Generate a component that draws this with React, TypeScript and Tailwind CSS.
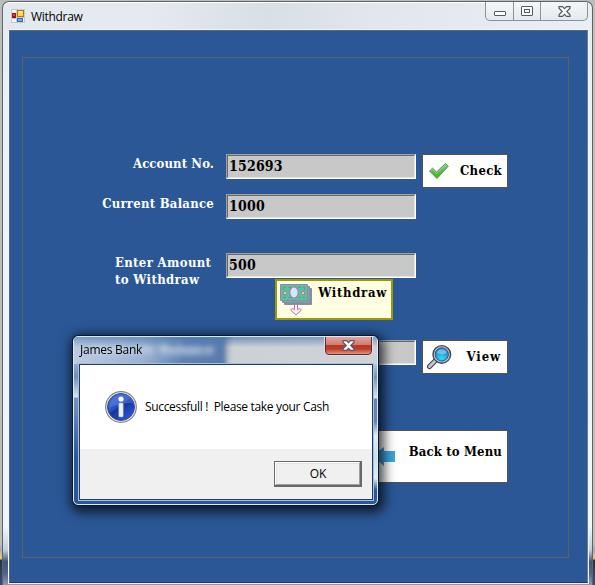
import type { ReactNode } from "react";

const serif = "font-['DejaVu_Serif_Condensed','DejaVu_Serif',serif] [font-stretch:condensed] font-bold whitespace-nowrap";
const sans = "font-['Open_Sans','Noto_Sans',sans-serif] whitespace-nowrap";

function Field({ value }: { value?: string }) {
  return (
    <div className="h-[25px] w-[190px] border border-t-[#a0a0a0] border-l-[#a0a0a0] border-r-white border-b-white">
      <div className={`h-full border border-t-[#696969] border-l-[#696969] border-r-[#e3e3e3] border-b-[#e3e3e3] bg-[#c8c8c8] pl-px text-[14px] leading-[21px] tracking-[0.2px] text-black ${serif}`}>
        {value}
      </div>
    </div>
  );
}

function Label({ children, className = "" }: { children: ReactNode; className?: string }) {
  return <div className={`text-[13px] leading-[17px] text-white ${serif} ${className}`}>{children}</div>;
}

function CheckIcon() {
  return (
    <svg width="22" height="18" viewBox="0 0 22 18">
      <defs>
        <linearGradient id="tick" x1="0" y1="0" x2="0" y2="1">
          <stop offset="0" stopColor="#8fd08e" />
          <stop offset=".5" stopColor="#62b45c" />
          <stop offset="1" stopColor="#35c100" />
        </linearGradient>
      </defs>
      <path d="M1.500 9 4.500 6.200l4 3.800L17.500 1.500l2.800 2.700L9 16.500z" fill="url(#tick)" stroke="#4f9d50" strokeWidth="1" strokeLinejoin="round" />
      <path d="m3 8.800 1.500-1.200 4 4L17.500 3" fill="none" stroke="#a8dba6" strokeWidth=".8" />
    </svg>
  );
}

function CashIcon() {
  return (
    <svg width="33" height="33" viewBox="0 0 33 33">
      <path d="M4.500 4.500h27v16h-27z" fill="#58a598" stroke="#a47fae" />
      <path d="M2.500 2.500h27v16h-27z" fill="#60b6a0" stroke="#a47fae" />
      <path d="M.5.500h27v16H.5z" fill="#5cc0a0" stroke="#a47fae" />
      <path d="M3 3.500h22M3 13.500h22M3.500 3v11M24.500 3v11" stroke="#5a9d94" strokeDasharray="3 2" />
      <ellipse cx="14" cy="8.500" rx="4.200" ry="5.500" fill="#d5edfc" stroke="#a47fae" strokeWidth="1.200" />
      <path d="m11.500 10 4-4M13 12l4-4" stroke="#b8d8f5" />
      <circle cx="5" cy="9" r="1.700" fill="#efd18a" stroke="#a47fae" />
      <circle cx="23" cy="9" r="1.700" fill="#efd18a" stroke="#a47fae" />
      <path d="M14.500 20.500h3v5l2.500-1 1.500 1.500-5.500 5-5.500-5 1.500-1.500 2.500 1z" fill="#f8e7ee" stroke="#aa84ad" />
    </svg>
  );
}

function MagnifierIcon() {
  return (
    <svg width="25" height="26" viewBox="0 0 25 26">
      <defs>
        <radialGradient id="lens" cx=".5" cy=".8" r=".8">
          <stop offset="0" stopColor="#22e4f5" />
          <stop offset=".5" stopColor="#23a9df" />
          <stop offset="1" stopColor="#2470b5" />
        </radialGradient>
      </defs>
      <path d="m9.500 15.500-7 7" stroke="#373c49" strokeWidth="5" strokeLinecap="round" />
      <path d="m9.500 15.500-7 7" stroke="#c2c7d0" strokeWidth="3" strokeLinecap="round" />
      <circle cx="14.800" cy="10.400" r="8.800" fill="#c0c5ce" stroke="#3f4655" strokeWidth="1.400" />
      <circle cx="14.800" cy="10.400" r="6.600" fill="url(#lens)" stroke="#315987" />
      <path d="M10 9c0-5 9.500-5 9.500 0-2 1.500-7 1.500-9.500 0" fill="#95cdeb" opacity=".7" />
    </svg>
  );
}

function InfoIcon() {
  return (
    <svg width="32" height="32" viewBox="0 0 32 32">
      <defs>
        <linearGradient id="info" x1="0" y1="0" x2=".7" y2="1">
          <stop offset="0" stopColor="#4a75dc" />
          <stop offset=".5" stopColor="#2450c0" />
          <stop offset=".55" stopColor="#153597" />
          <stop offset="1" stopColor="#2855da" />
        </linearGradient>
      </defs>
      <circle cx="16" cy="16" r="15.300" fill="#eee" stroke="#858585" strokeWidth="1.200" />
      <circle cx="16" cy="16" r="13.500" fill="url(#info)" stroke="#3b4c96" />
      <path d="M4 17C5 0 27 0 28 12c-7 0-17 1-24 5" fill="#7598ec" opacity=".35" />
      <circle cx="16" cy="8" r="2.600" fill="white" />
      <rect x="13.800" y="12" width="4.400" height="14" rx="1" fill="#f0f0f4" stroke="#a8b4d6" strokeWidth=".5" />
    </svg>
  );
}

function CloseGlyph() {
  return (
    <svg width="13" height="11" viewBox="0 0 13 11">
      <path d="M1 .7h3.500l2 2 2-2H12v1.500L8.800 5.500 12 8.800v1.500H8.500l-2-2-2 2H1V8.800l3.200-3.300L1 2.200z" fill="#fafafa" stroke="#535966" strokeWidth="1.200" />
    </svg>
  );
}

function AppIcon() {
  return (
    <svg width="14" height="14" viewBox="0 0 14 14" shapeRendering="crispEdges">
      <path d="M0 0h14v14H0z" fill="#c6c9cd" />
      <path d="M1 1h4v3H1zM1 10h4v3H1zM12 9h1v4h-1z" fill="#f4f4f4" />
      <path d="M1 4h4v5H1z" fill="#8e1720" />
      <path d="M2 5h2v2H2z" fill="#e3473b" />
      <path d="M6 1h7v7H6z" fill="#b07c12" />
      <path d="M7 2h5v5H7z" fill="#ffd34c" />
      <path d="M8 2h3v2H8z" fill="#ffe68e" />
      <path d="M6 9h6v4H6z" fill="#3769ba" />
      <path d="M7 10h4v2H7z" fill="#79a9ee" />
    </svg>
  );
}

function MessageBox() {
  return (
    <div className="absolute left-[73px] top-[336px] flex h-[169px] w-[305px] flex-col rounded-[5px] border border-[#dce8f2] bg-[linear-gradient(180deg,transparent_27px,#8fa9cc_27px,#6b8ebd_40px,#dce6f2_60px,#7295c2_61px,#6488b9_75px,#295798_120px,#295798_100%)] pl-[5px] pr-[4px] pb-[4px] shadow-[0_0_0_1px_#071a33,2px_3px_12px_4px_rgba(0,0,0,0.75)]">
      <div className="absolute right-0 top-[27px] h-[130px] w-[5px] bg-[linear-gradient(180deg,#b9c8dc_0%,#7094c0_10%,#dce7f3_26%,#6287b9_27%,#5e83b6_44%,#e3f0f8_55%,#c0e3f2_72%,#e1edf5_88%,#285799_97%)]" />
      <div className="relative -ml-[5px] -mr-[4px] flex h-[27px] shrink-0 items-start justify-between overflow-hidden rounded-t-[4px] bg-[linear-gradient(90deg,rgba(225,233,243,0.8)_0px,rgba(190,206,227,0.75)_70px,rgba(190,206,227,0.35)_110px,rgba(190,206,227,0.3)_150px,rgba(205,211,217,0.8)_160px,#cfd3d7_100%)] pl-[6px] pr-[5px] backdrop-blur-[3px]">
        <div className="absolute inset-0 bg-[linear-gradient(180deg,#4e79b0_0,transparent_38%)] opacity-60" />
        <span className={`relative mt-[4px] text-[12px] leading-[17px] tracking-[-0.25px] text-black ${sans}`}>James Bank</span>
        <div className="relative -mt-px flex h-[19px] w-[47px] items-center justify-center rounded-b-[4px] border border-[#5b2c32] bg-[linear-gradient(180deg,#e5a399_0%,#cf7a6d_46%,#ba3827_50%,#bd3b29_70%,#e59580_100%)] shadow-[0_0_0_1px_#e2d9da]">
          <CloseGlyph />
        </div>
      </div>
      <div className="relative flex flex-1 flex-col border border-[#223b5e] shadow-[0_0_0_1px_#acbfd8]">
        <div className="flex h-[84px] items-center bg-white pl-[25px]">
          <InfoIcon />
          <span className={`ml-[8px] whitespace-pre text-[12px] leading-[16px] tracking-[-0.33px] text-black ${sans}`}>Successfull !  Please take your Cash</span>
        </div>
        <div className="flex flex-1 justify-end bg-[#f0f0f0] pr-[10px] pt-[12px]">
          <div className="h-[26px] w-[88px] border-b-2 border-l border-r-2 border-t border-[#696969]">
            <div className="h-full border border-b-[#a0a0a0] border-l-white border-r-[#a0a0a0] border-t-white">
              <div className={`h-full border-l border-t border-[#e3e3e3] bg-[#f0f0f0] text-center text-[12px] leading-[20px] tracking-[-0.2px] text-black ${sans}`}>OK</div>
            </div>
          </div>
        </div>
      </div>
    </div>
  );
}

export default function App() {
  return (
    <div className="relative flex h-[585px] w-[595px] overflow-hidden bg-[linear-gradient(180deg,#bcbebd_0,#bcbebd_544px,#9dabc4_550px,#dcc783_556px,#dcc783_559px,#26334f_560px,#3c4d70_585px)] pl-[2px] pt-px">
      <div className="flex h-[584px] w-[591px] flex-col rounded-t-[7px] border border-b-0 border-[#5e6468] bg-[linear-gradient(180deg,#e6ebef_0,#edf2f6_20%,#f0f6fb_90%,#c7ceda_94%,#455472_96%,#50638a_98%,#8998b8_100%)] px-[5px]">
        <header className="-mx-[4px] flex h-[28px] shrink-0 items-start rounded-t-[6px] border-t border-white bg-[linear-gradient(100deg,#e4e9ee_0%,#e4eaef_25%,#d8dfe5_45%,#e0e6eb_60%,#e9eff4_100%)] pl-[7px]">
          <div className="mt-[6px]"><AppIcon /></div>
          <h1 className={`ml-[6px] mt-[5px] text-[12px] font-normal leading-[17px] tracking-[-0.3px] text-black ${sans}`}>Withdraw</h1>
          <div className="-mt-px ml-auto mr-[3px] flex h-[19px] w-[103px] rounded-b-[5px] border border-t-0 border-[#8c9398] bg-[linear-gradient(180deg,#f4f7f9,#e3e9ed)]">
            <div className="flex w-[28px] items-center justify-center border-r border-[#8c9398]">
              <div className="mt-[4px] h-[5px] w-[12px] rounded-[1px] border border-[#535966] bg-[#fcfcfc]" />
            </div>
            <div className="flex w-[27px] items-center justify-center border-r border-[#8c9398]">
              <div className="flex h-[10px] w-[12px] items-center justify-center rounded-[1px] border border-[#535966] bg-[#fcfcfc]">
                <div className="h-[4px] w-[6px] border border-[#535966]" />
              </div>
            </div>
            <div className="flex flex-1 items-center justify-center"><CloseGlyph /></div>
          </div>
        </header>
        <main className="ml-px h-[553px] w-[579px] shrink-0 border border-b-[#253956] border-l-[#606a76] border-r-[#707c8b] border-t-[#5b6874] bg-[#2b5797] pl-[12px] pt-[26px] shadow-[0_0_0_1px_#eef4fa]">
          <section className="h-[501px] w-[547px] border border-[#5f6065] pt-[96px]">
            <div className="flex h-[34px] items-start">
              <Label className="w-[191px] pt-px text-right tracking-[0.1px]">Account No.</Label>
              <div className="ml-[12px]"><Field value="152693" /></div>
              <button className={`ml-[6px] flex h-[34px] w-[86px] items-center justify-between border border-[#57524c] bg-white pl-[5px] pr-[5px] text-[13px] tracking-[0.3px] text-black ${serif}`}>
                <CheckIcon /><span>Check</span>
              </button>
            </div>
            <div className="mt-[6px] flex h-[26px] items-start">
              <Label className="w-[191px] pt-px text-right tracking-[0.25px]">Current Balance</Label>
              <div className="ml-[12px]"><Field value="1000" /></div>
            </div>
            <div className="mt-[33px] flex h-[26px] items-start">
              <Label className="w-[191px] pl-[92px] pt-px tracking-[0.35px]">Enter Amount<br />to Withdraw</Label>
              <div className="ml-[12px]"><Field value="500" /></div>
            </div>
            <button className={`ml-[252px] flex h-[41px] w-[118px] items-start justify-between border-2 border-[#9b9a05] bg-[#ffffe1] pl-[3px] pr-[4px] pt-[3px] text-[13px] leading-[17px] tracking-[0.7px] text-black ${serif}`}>
              <CashIcon /><span>Withdraw</span>
            </button>
            <div className="mt-[20px] flex h-[34px] items-start">
              <Label className="w-[191px] pt-px text-right tracking-[0.3px]">Available Balance</Label>
              <div className="ml-[12px]"><Field /></div>
              <button className={`ml-[6px] flex h-[34px] w-[86px] items-center justify-between border border-[#57524c] bg-white pl-[4px] pr-[6px] text-[13px] tracking-[0.9px] text-black ${serif}`}>
                <MagnifierIcon /><span>View</span>
              </button>
            </div>
            <button className={`ml-[337px] mt-[56px] flex h-[53px] w-[148px] items-start justify-between border border-[#57524c] bg-white pl-[9px] pr-[5px] pt-[12px] text-[13px] leading-[17px] tracking-[0.15px] text-black ${serif}`}>
              <svg className="mt-[3px]" width="26" height="20" viewBox="0 0 26 20"><path d="M2 10 14 1v4h11v11H14v4z" fill="#3da4d8" /></svg>
              <span>Back to Menu</span>
            </button>
          </section>
        </main>
      </div>
      <MessageBox />
    </div>
  );
}
